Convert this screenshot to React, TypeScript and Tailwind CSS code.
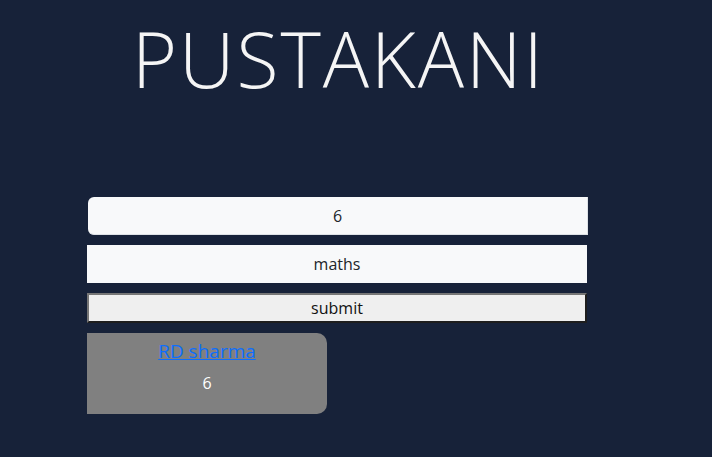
export default function App() {
  const font = { fontFamily: '"Open Sans", "Noto Sans", sans-serif' };
  return (
    <div className="min-h-[457px] w-full bg-[#172239]" style={font}>
      <div className="ml-[87px] w-[501px] flex flex-col">
        <h1 className="pt-[20px] pl-[2px] text-center text-[77px] leading-[77px] font-light tracking-[2px] text-[#f5f5f5]">
          PUSTAKANI
        </h1>
        <input
          className="mt-[100px] ml-[1px] h-[38px] w-[500px] rounded-l-[6px] border-r border-b border-[#dee2e6] bg-[#f8f9fa] text-center text-[16px] text-[#212529] outline-none"
          defaultValue="6"
        />
        <input
          className="mt-[10px] h-[38px] w-[500px] bg-[#f8f9fa] text-center text-[16px] text-[#212529] outline-none"
          defaultValue="maths"
        />
        <button className="mt-[10px] h-[30px] w-[500px] border-2 border-t-[#767676] border-l-[#767676] border-b-[#1e1e1e] border-r-[#1e1e1e] bg-[#efefef] text-center text-[16px] leading-none text-[#111]">
          submit
        </button>
        <div className="mt-[10px] flex h-[81px] w-[240px] flex-col items-center rounded-r-[10px] bg-[#808080]">
          <a href="#" className="mt-[4px] text-[19px] text-[#0d6efd] underline">
            RD sharma
          </a>
          <span className="mt-[5px] text-[16px] text-white">6</span>
        </div>
      </div>
    </div>
  );
}
